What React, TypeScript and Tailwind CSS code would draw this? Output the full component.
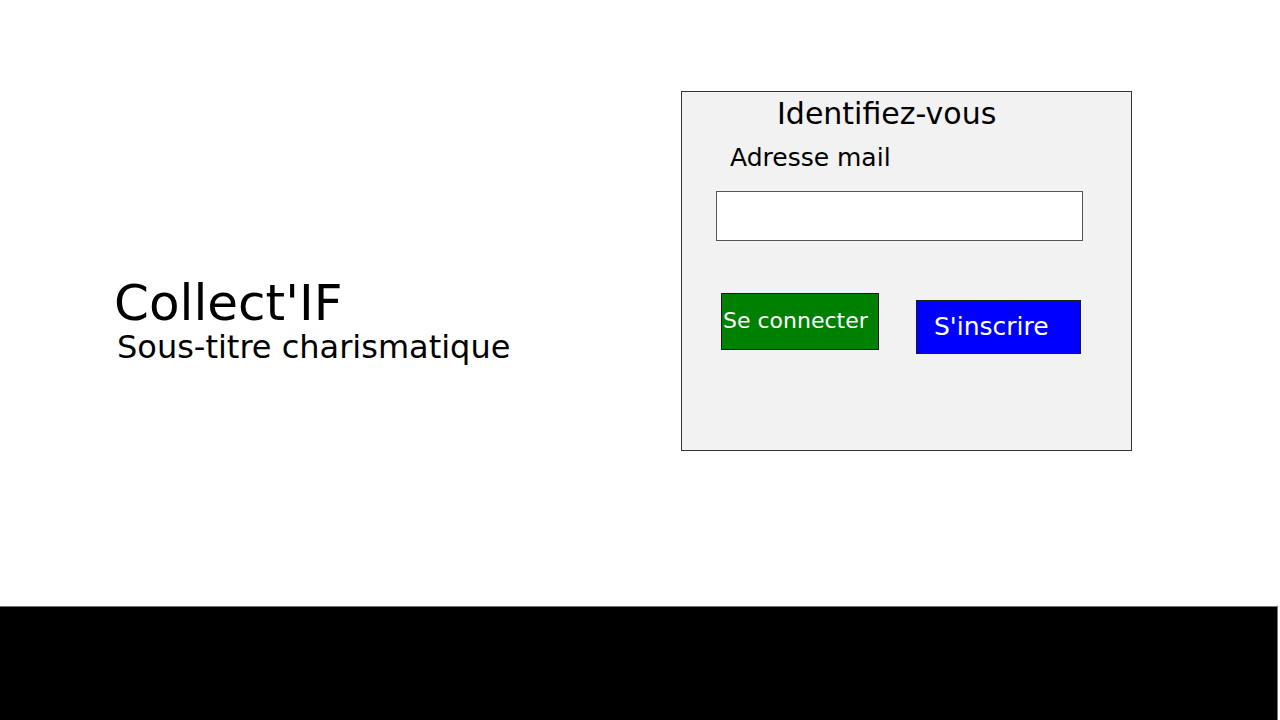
export default function App() {
  return (
    <div className="h-screen w-full flex flex-col bg-white overflow-hidden" style={{ fontFamily: '"DejaVu Sans", sans-serif' }}>
      <div className="h-[606px] flex items-start">
        <div className="w-[681px] pt-[278px] pl-[114px] text-black">
          <h1 className="text-[50px] leading-[50px] font-normal">Collect'IF</h1>
          <p className="mt-[3px] ml-[3px] text-[32px] leading-[32px]">Sous-titre charismatique</p>
        </div>

        <form className="mt-[91px] w-[451px] h-[360px] border border-[#333333] bg-[#f2f2f2] flex flex-col items-start">
          <h2 className="mt-[5px] ml-[95px] text-[30px] leading-[34px] text-black">Identifiez-vous</h2>
          <label className="mt-[12px] ml-[48px] text-[25px] leading-[30px] text-black">Adresse mail</label>
          <input
            type="email"
            className="mt-[18px] ml-[34px] w-[367px] h-[50px] bg-white border border-[#555555] outline-none px-2"
          />
          <div className="flex items-start mt-[52px] ml-[39px]">
            <button
              type="button"
              className="w-[158px] h-[57px] bg-[#008000] border border-[#1a1a1a] text-white text-[22px] leading-[26px] flex items-center pl-[1px] pb-[2px]"
            >
              Se connecter
            </button>
            <button
              type="button"
              className="mt-[7px] ml-[37px] w-[165px] h-[54px] bg-[#0000ff] border border-[#1a1a1a] text-white text-[25px] leading-[30px] flex items-center pl-[17px]"
            >
              S'inscrire
            </button>
          </div>
        </form>
      </div>
      <footer className="h-[114px] w-[1278px] bg-black border-t border-r border-[#777777]" />
    </div>
  );
}
